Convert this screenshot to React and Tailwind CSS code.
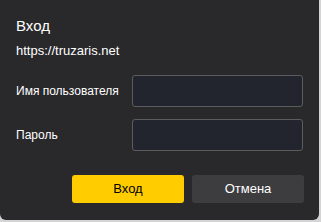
import React from 'react';

export default function App() {
  return (
    <div className="w-[321px] h-[222px] bg-[#d4d4d4]" style={{ fontFamily: '"Liberation Sans", Arial, sans-serif' }}>
      <div className="w-[319px] h-[220px] bg-[#29292b] rounded-br-[6px] rounded-bl-[6px] flex flex-col pl-4 pr-[15px] pt-[16px]">
        <div className="text-[15px] leading-[20px] text-white">Вход</div>
        <div className="mt-[7px] text-[13px] leading-[16px] text-white">https://truzaris.net</div>

        <div className="mt-[16px] flex items-center">
          <label className="w-[116px] text-[12px] text-white">Имя пользователя</label>
          <input className="w-[171px] h-[32px] bg-[#22252e] border border-[#5c5c5e] rounded-[3px] outline-none" />
        </div>
        <div className="mt-[12px] flex items-center">
          <label className="w-[116px] text-[12px] text-white">Пароль</label>
          <input type="password" className="w-[171px] h-[32px] bg-[#22252e] border border-[#5c5c5e] rounded-[3px] outline-none" />
        </div>

        <div className="mt-[24px] flex justify-end gap-2">
          <button className="w-[112px] h-[28px] bg-[#ffcc00] rounded-[3px] text-[13px] text-black">Вход</button>
          <button className="w-[112px] h-[28px] bg-[#3d3d3f] rounded-[3px] text-[13px] text-white">Отмена</button>
        </div>
      </div>
    </div>
  );
}
